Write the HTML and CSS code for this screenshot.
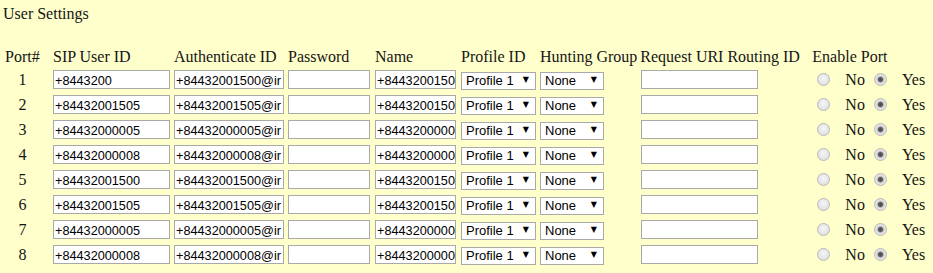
FILE: index.html
```html
<!DOCTYPE html>
<html lang="en">
<head>
  <meta charset="UTF-8">
  <title>User Settings</title>
  <link rel="stylesheet" href="styles.css">
</head>
<body>
  <div class="page">
    <p class="title">User Settings</p>
    <table class="users">
      <tr>
        <th class="c-port">Port#</th>
        <th class="c-sip">SIP User ID</th>
        <th class="c-auth">Authenticate ID</th>
        <th class="c-pass">Password</th>
        <th class="c-name">Name</th>
        <th class="c-prof">Profile ID</th>
        <th class="c-hunt">Hunting Group</th>
        <th class="c-uri">Request URI Routing ID</th>
        <th class="c-en">Enable Port</th>
      </tr>
      <tr>
        <td class="c-port">1</td>
        <td class="c-sip"><input class="txt sip" value="+8443200"></td>
        <td class="c-auth"><input class="txt auth" value="+84432001500@ir"></td>
        <td class="c-pass"><input class="txt pass" type="password"></td>
        <td class="c-name"><input class="txt name" value="+8443200150"></td>
        <td class="c-prof"><span class="sel"><select class="prof"><option>Profile 1</option></select></span></td>
        <td class="c-hunt"><span class="sel"><select class="hunt"><option>None</option></select></span></td>
        <td class="c-uri"><input class="txt uri"></td>
        <td class="c-en"><input type="radio" name="en1" class="rad">&nbsp;&nbsp;&nbsp;No <input type="radio" name="en1" class="rad" checked>&nbsp;&nbsp;&nbsp;Yes</td>
      </tr>
      <tr>
        <td class="c-port">2</td>
        <td class="c-sip"><input class="txt sip" value="+84432001505"></td>
        <td class="c-auth"><input class="txt auth" value="+84432001505@ir"></td>
        <td class="c-pass"><input class="txt pass" type="password"></td>
        <td class="c-name"><input class="txt name" value="+8443200150"></td>
        <td class="c-prof"><span class="sel"><select class="prof"><option>Profile 1</option></select></span></td>
        <td class="c-hunt"><span class="sel"><select class="hunt"><option>None</option></select></span></td>
        <td class="c-uri"><input class="txt uri"></td>
        <td class="c-en"><input type="radio" name="en2" class="rad">&nbsp;&nbsp;&nbsp;No <input type="radio" name="en2" class="rad" checked>&nbsp;&nbsp;&nbsp;Yes</td>
      </tr>
      <tr>
        <td class="c-port">3</td>
        <td class="c-sip"><input class="txt sip" value="+84432000005"></td>
        <td class="c-auth"><input class="txt auth" value="+84432000005@ir"></td>
        <td class="c-pass"><input class="txt pass" type="password"></td>
        <td class="c-name"><input class="txt name" value="+8443200000"></td>
        <td class="c-prof"><span class="sel"><select class="prof"><option>Profile 1</option></select></span></td>
        <td class="c-hunt"><span class="sel"><select class="hunt"><option>None</option></select></span></td>
        <td class="c-uri"><input class="txt uri"></td>
        <td class="c-en"><input type="radio" name="en3" class="rad">&nbsp;&nbsp;&nbsp;No <input type="radio" name="en3" class="rad" checked>&nbsp;&nbsp;&nbsp;Yes</td>
      </tr>
      <tr>
        <td class="c-port">4</td>
        <td class="c-sip"><input class="txt sip" value="+84432000008"></td>
        <td class="c-auth"><input class="txt auth" value="+84432000008@ir"></td>
        <td class="c-pass"><input class="txt pass" type="password"></td>
        <td class="c-name"><input class="txt name" value="+8443200000"></td>
        <td class="c-prof"><span class="sel"><select class="prof"><option>Profile 1</option></select></span></td>
        <td class="c-hunt"><span class="sel"><select class="hunt"><option>None</option></select></span></td>
        <td class="c-uri"><input class="txt uri"></td>
        <td class="c-en"><input type="radio" name="en4" class="rad">&nbsp;&nbsp;&nbsp;No <input type="radio" name="en4" class="rad" checked>&nbsp;&nbsp;&nbsp;Yes</td>
      </tr>
      <tr>
        <td class="c-port">5</td>
        <td class="c-sip"><input class="txt sip" value="+84432001500"></td>
        <td class="c-auth"><input class="txt auth" value="+84432001500@ir"></td>
        <td class="c-pass"><input class="txt pass" type="password"></td>
        <td class="c-name"><input class="txt name" value="+8443200150"></td>
        <td class="c-prof"><span class="sel"><select class="prof"><option>Profile 1</option></select></span></td>
        <td class="c-hunt"><span class="sel"><select class="hunt"><option>None</option></select></span></td>
        <td class="c-uri"><input class="txt uri"></td>
        <td class="c-en"><input type="radio" name="en5" class="rad">&nbsp;&nbsp;&nbsp;No <input type="radio" name="en5" class="rad" checked>&nbsp;&nbsp;&nbsp;Yes</td>
      </tr>
      <tr>
        <td class="c-port">6</td>
        <td class="c-sip"><input class="txt sip" value="+84432001505"></td>
        <td class="c-auth"><input class="txt auth" value="+84432001505@ir"></td>
        <td class="c-pass"><input class="txt pass" type="password"></td>
        <td class="c-name"><input class="txt name" value="+8443200150"></td>
        <td class="c-prof"><span class="sel"><select class="prof"><option>Profile 1</option></select></span></td>
        <td class="c-hunt"><span class="sel"><select class="hunt"><option>None</option></select></span></td>
        <td class="c-uri"><input class="txt uri"></td>
        <td class="c-en"><input type="radio" name="en6" class="rad">&nbsp;&nbsp;&nbsp;No <input type="radio" name="en6" class="rad" checked>&nbsp;&nbsp;&nbsp;Yes</td>
      </tr>
      <tr>
        <td class="c-port">7</td>
        <td class="c-sip"><input class="txt sip" value="+84432000005"></td>
        <td class="c-auth"><input class="txt auth" value="+84432000005@ir"></td>
        <td class="c-pass"><input class="txt pass" type="password"></td>
        <td class="c-name"><input class="txt name" value="+8443200000"></td>
        <td class="c-prof"><span class="sel"><select class="prof"><option>Profile 1</option></select></span></td>
        <td class="c-hunt"><span class="sel"><select class="hunt"><option>None</option></select></span></td>
        <td class="c-uri"><input class="txt uri"></td>
        <td class="c-en"><input type="radio" name="en7" class="rad">&nbsp;&nbsp;&nbsp;No <input type="radio" name="en7" class="rad" checked>&nbsp;&nbsp;&nbsp;Yes</td>
      </tr>
      <tr>
        <td class="c-port">8</td>
        <td class="c-sip"><input class="txt sip" value="+84432000008"></td>
        <td class="c-auth"><input class="txt auth" value="+84432000008@ir"></td>
        <td class="c-pass"><input class="txt pass" type="password"></td>
        <td class="c-name"><input class="txt name" value="+8443200000"></td>
        <td class="c-prof"><span class="sel"><select class="prof"><option>Profile 1</option></select></span></td>
        <td class="c-hunt"><span class="sel"><select class="hunt"><option>None</option></select></span></td>
        <td class="c-uri"><input class="txt uri"></td>
        <td class="c-en"><input type="radio" name="en8" class="rad">&nbsp;&nbsp;&nbsp;No <input type="radio" name="en8" class="rad" checked>&nbsp;&nbsp;&nbsp;Yes</td>
      </tr>
    </table>
  </div>
</body>
</html>
```

FILE: styles.css
```css
body {
  margin: 0;
  background: #ffffcc;
  font-family: 'Liberation Serif', 'Times New Roman', serif;
  font-size: 16px;
  color: #151515;
}

.page {
  padding: 5px 0 0 3px;
}

.title {
  margin: 0;
  line-height: 18px;
}

.users {
  margin-top: 25px;
  border-collapse: collapse;
}

.users th {
  font-weight: normal;
  text-align: left;
  white-space: nowrap;
  line-height: 18px;
  padding: 0;
}

.users td {
  box-sizing: border-box;
  height: 25px;
  padding: 4px 0 0 0;
  line-height: 18px;
  white-space: nowrap;
  vertical-align: baseline;
}

/* columns */
.users .c-port { width: 35px; padding-left: 2px; }
.users td.c-port { text-align: center; }
.users .c-sip  { width: 117px; padding-left: 13px; }
.users .c-auth { width: 110px; padding-left: 4px; }
.users .c-pass { width: 82px; padding-left: 4px; }
.users .c-name { width: 81px; padding-left: 5px; }
.users .c-prof { width: 75px; padding-left: 5px; }
.users .c-hunt { width: 97px; padding-left: 4px; }
.users .c-uri  { width: 167px; padding-left: 3px; }
.users .c-en   { padding-left: 5px; }

.users th.c-port, .users th.c-sip, .users th.c-auth, .users th.c-pass,
.users th.c-name, .users th.c-prof, .users th.c-hunt, .users th.c-uri {
  box-sizing: content-box;
}

.txt {
  box-sizing: border-box;
  height: 19px;
  margin: 0;
  padding: 3px 0 0 1px;
  border: 1px solid #a9a9a9;
  background: #fff;
  font-family: 'Liberation Sans', Arial, sans-serif;
  font-size: 12.7px;
  color: #000;
  vertical-align: baseline;
}

.sip { width: 117px; }
.auth { width: 110px; }
.pass { width: 82px; }
.name { width: 81px; }
.uri { width: 117px; margin-left: 1px; }

.sel {
  position: relative;
  display: inline-block;
}

.sel::after {
  content: '\25BC';
  position: absolute;
  right: 7px;
  top: 4px;
  font-family: 'DejaVu Sans', sans-serif;
  font-size: 8px;
  line-height: 10px;
  color: #000;
  pointer-events: none;
}

.sel select {
  -webkit-appearance: none;
  appearance: none;
  box-sizing: border-box;
  height: 18px;
  margin: 0;
  padding: 0 0 0 4px;
  border: 1px solid #a9a9a9;
  border-radius: 0;
  background: #fff;
  font-family: 'Liberation Sans', Arial, sans-serif;
  font-size: 13px;
  color: #000;
}

.prof { width: 75px; }
.hunt { width: 64px; }

.rad {
  -webkit-appearance: none;
  appearance: none;
  box-sizing: border-box;
  width: 13px;
  height: 13px;
  margin: 3px 3px 0 5px;
  border: 1px solid #b9b9b9;
  border-radius: 50%;
  background: radial-gradient(circle at 50% 40%, #f6f6f6 0, #e2e2e2 70%, #d4d4d4 100%);
  vertical-align: -1px;
}

.rad:checked {
  background: radial-gradient(circle, #4a4a4a 0, #5a5a5a 2px, #c8c8c8 3.2px, #e6e6e6 4.5px, #dadada 100%);
}
```
